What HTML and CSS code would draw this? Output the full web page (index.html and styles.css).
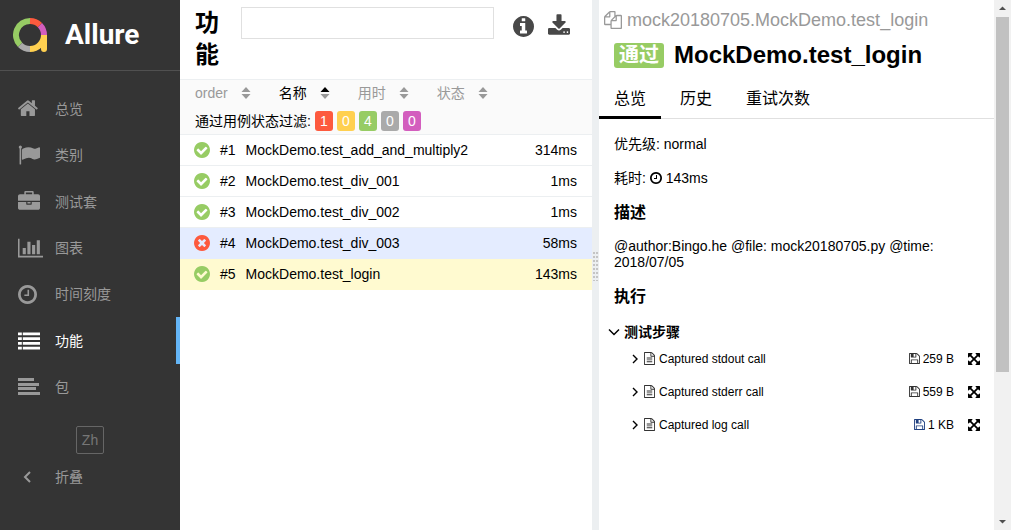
FILE: index.html
```html
<!DOCTYPE html>
<html lang="zh-CN">
<head>
<meta charset="utf-8">
<title>Allure</title>
<link rel="stylesheet" href="styles.css">
</head>
<body>
<svg class="sprite" aria-hidden="true">
  <symbol id="home" viewBox="90 64 1792 1792"><path d="M1472 992v480q0 26-19 45t-45 19h-384v-384h-256v384h-384q-26 0-45-19t-19-45v-480q0-1 .5-3t.5-3l575-474 575 474q1 2 1 6zm223-69l-62 74q-8 9-21 11h-3q-13 0-21-7l-692-577-692 577q-12 8-24 7-13-2-21-11l-62-74q-8-10-7-23.5t11-21.5l719-599q32-26 76-26t76 26l244 204v-195q0-14 9-23t23-9h192q14 0 23 9t9 23v408l219 182q10 8 11 21.5t-7 23.5z"/></symbol>
  <symbol id="flag" viewBox="0 0 1792 1792"><path d="M320 256q0 72-64 110v1266q0 13-9.5 22.5t-22.5 9.5h-64q-13 0-22.5-9.5t-9.5-22.5v-1266q-64-38-64-110 0-53 37.500-90.500t90.500-37.500 90.500 37.500 37.500 90.500zm1472 64v763q0 25-12.500 38.500t-39.500 27.500q-215 116-369 116-61 0-123.500-22t-108.500-48-115.500-48-142.500-22q-192 0-464 146-17 9-33 9-26 0-45-19t-19-45v-742q0-32 31-55 21-14 79-43 236-120 421-120 107 0 200 29t219 88q38 19 88 19 54 0 117.500-21t110-47 88-47 54.500-21q26 0 45 19t19 45z"/></symbol>
  <symbol id="briefcase" viewBox="0 0 1792 1792"><path d="M640 256h512v-128h-512v128zm1152 640v480q0 66-47 113t-113 47h-1472q-66 0-113-47t-47-113v-480h672v160q0 26 19 45t45 19h320q26 0 45-19t19-45v-160h672zm-768 0v128h-256v-128h256zm768-480v384h-1792v-384q0-66 47-113t113-47h352v-160q0-40 28-68t68-28h576q40 0 68 28t28 68v160h352q66 0 113 47t47 113z"/></symbol>
  <symbol id="chart" viewBox="0 0 2048 1792"><path d="M640 896v512h-256v-512h256zm384-512v1024h-256v-1024h256zm1024 1152v128h-2048v-1536h128v1408h1920zm-640-896v768h-256v-768h256zm384-384v1152h-256v-1152h256z"/></symbol>
  <symbol id="clock" viewBox="128 128 1536 1536"><path d="M1024 544v448q0 14-9 23t-23 9h-320q-14 0-23-9t-9-23v-64q0-14 9-23t23-9h224v-352q0-14 9-23t23-9h64q14 0 23 9t9 23zm416 352q0-148-73-273t-198-198-273-73-273 73-198 198-73 273 73 273 198 198 273 73 273-73 198-198 73-273zm224 0q0 209-103 385.500t-279.500 279.500-385.500 103-385.500-103-279.500-279.500-103-385.500 103-385.500 279.500-279.500 385.500-103 385.500 103 279.500 279.500 103 385.500z"/></symbol>
  <symbol id="list" viewBox="0 0 23 22"><path d="M0 2h4v3H0zM5 2h18v3H5zM0 7h4v3H0zM5 7h18v3H5zM0 12h4v3H0zM5 12h18v3H5zM0 17h4v3H0zM5 17h18v3H5z"/></symbol>
  <symbol id="package" viewBox="0 0 22 22"><path d="M0 2h16v3H0zM0 7h21v3H0zM0 11h18v3H0zM0 16h22v3H0z"/></symbol>
  <symbol id="check" viewBox="128 128 1536 1536"><path d="M1412 734q0-28-18-46l-91-90q-19-19-45-19t-45 19l-408 407-226-226q-19-19-45-19t-45 19l-91 90q-18 18-18 46 0 27 18 45l362 362q19 19 45 19 27 0 46-19l543-543q18-18 18-45zm252 162q0 209-103 385.500t-279.500 279.500-385.500 103-385.500-103-279.500-279.500-103-385.500 103-385.500 279.500-279.500 385.500-103 385.500 103 279.500 279.500 103 385.500z"/></symbol>
  <symbol id="times" viewBox="128 128 1536 1536"><path d="M1277 1122q0-26-19-45l-181-181 181-181q19-19 19-45 0-27-19-46l-90-90q-19-19-46-19-26 0-45 19l-181 181-181-181q-19-19-45-19-27 0-46 19l-90 90q-19 19-19 46 0 26 19 45l181 181-181 181q-19 19-19 45 0 27 19 46l90 90q19 19 46 19 26 0 45-19l181-181 181 181q19 19 45 19 27 0 46-19l90-90q19-19 19-46zm387-226q0 209-103 385.500t-279.500 279.500-385.500 103-385.500-103-279.500-279.500-103-385.500 103-385.500 279.500-279.500 385.500-103 385.500 103 279.500 279.500 103 385.500z"/></symbol>
  <symbol id="info" viewBox="128 128 1536 1536"><path d="M1152 1376v-160q0-14-9-23t-23-9h-96v-512q0-14-9-23t-23-9h-320q-14 0-23 9t-9 23v160q0 14 9 23t23 9h96v320h-96q-14 0-23 9t-9 23v160q0 14 9 23t23 9h448q14 0 23-9t9-23zm-128-896v-160q0-14-9-23t-23-9h-192q-14 0-23 9t-9 23v160q0 14 9 23t23 9h192q14 0 23-9t9-23zm640 416q0 209-103 385.500t-279.500 279.500-385.500 103-385.500-103-279.500-279.500-103-385.500 103-385.500 279.500-279.500 385.500-103 385.500 103 279.500 279.500 103 385.500z"/></symbol>
  <symbol id="download" viewBox="64 0 1664 1536"><path d="M1344 1344q0-26-19-45t-45-19-45 19-19 45 19 45 45 19 45-19 19-45zm256 0q0-26-19-45t-45-19-45 19-19 45 19 45 45 19 45-19 19-45zm128-224v320q0 40-28 68t-68 28h-1472q-40 0-68-28t-28-68v-320q0-40 28-68t68-28h465l135 136q58 56 136 56t136-56l136-136h464q40 0 68 28t28 68zm-325-569q17 41-14 70l-448 448q-18 19-45 19t-45-19l-448-448q-31-29-14-70 17-39 59-39h256v-448q0-26 19-45t45-19h256q26 0 45 19t19 45v448h256q42 0 59 39z"/></symbol>
  <symbol id="files" viewBox="0 0 1792 1792"><path d="M1696 384q40 0 68 28t28 68v1216q0 40-28 68t-68 28h-960q-40 0-68-28t-28-68v-288h-544q-40 0-68-28t-28-68v-672q0-40 20-88t48-76l408-408q28-28 76-48t88-20h416q40 0 68 28t28 68v328q68-40 128-40h416zm-544 213l-299 299h299v-299zm-640-384l-299 299h299v-299zm196 647l316-316v-416h-384v416q0 40-28 68t-68 28h-416v640h512v-256q0-40 20-88t48-76zm956 804v-1152h-384v416q0 40-28 68t-68 28h-416v640h896z"/></symbol>
  <symbol id="file" viewBox="128 0 1536 1792"><path d="M1596 380q28 28 48 76t20 88v1152q0 40-28 68t-68 28h-1344q-40 0-68-28t-28-68v-1600q0-40 28-68t68-28h896q40 0 88 20t76 48zm-444-244v376h376q-10-29-22-41l-313-313q-12-12-41-22zm384 1528v-1024h-416q-40 0-68-28t-28-68v-416h-768v1536h1280zM512 768h768v128h-768zM512 1024h768v128h-768zM512 1280h768v128h-768z"/></symbol>
  <symbol id="save" viewBox="128 128 1536 1536"><path d="M512 1536h768v-384h-768v384zm896 0h128v-896q0-14-10-38.500t-20-34.500l-281-281q-10-10-34-20t-39-10v416q0 40-28 68t-68 28h-576q-40 0-68-28t-28-68v-416h-128v1280h128v-416q0-40 28-68t68-28h832q40 0 68 28t28 68v416zm-384-928v-320q0-13-9.500-22.500t-22.500-9.500h-192q-13 0-22.500 9.500t-9.500 22.500v320q0 13 9.500 22.500t22.500 9.500h192q13 0 22.500-9.500t9.500-22.500zm640 32v928q0 40-28 68t-68 28h-1344q-40 0-68-28t-28-68v-1344q0-40 28-68t68-28h928q40 0 88 20t76 48l280 280q28 28 48 76t20 88z"/></symbol>
  <symbol id="expand" viewBox="128 128 1536 1536"><path d="M1411 541l-355 355 355 355 144-144q29-31 70-14 39 17 39 59v448q0 26-19 45t-45 19h-448q-42 0-59-40-17-39 14-69l144-144-355-355-355 355 144 144q31 30 14 69-17 40-59 40h-448q-26 0-45-19t-19-45v-448q0-42 40-59 39-17 69 14l144 144 355-355-355-355-144 144q-19 19-45 19-12 0-24-5-40-17-40-59v-448q0-26 19-45t45-19h448q42 0 59 40 17 39-14 69l-144 144 355 355 355-355-144-144q-31-30-14-69 17-40 59-40h448q26 0 45 19t19 45v448q0 42-39 59-13 5-25 5-26 0-45-19z"/></symbol>
  <symbol id="angle" viewBox="0 0 6 10"><path d="M1 1l4 4-4 4" fill="none" stroke="currentColor" stroke-width="1.400"/></symbol>
  <symbol id="angle-down" viewBox="0 0 12 8"><path d="M1 1.500l5 5 5-5" fill="none" stroke="currentColor" stroke-width="1.500"/></symbol>
  <symbol id="sort-up" viewBox="0 0 10 5"><path d="M5 0l4.500 5H.5z"/></symbol>
  <symbol id="sort-down" viewBox="0 0 10 5"><path d="M5 5l4.500-5H.5z"/></symbol>
</svg>
<div class="app">
  <aside class="side">
    <a class="brand" href="#">
      <svg class="logo" viewBox="0 0 34 34" stroke-width="6">
        <path stroke="#97cc64" d="M17 3A14 14 0 0 0 7.100 26.900"/>
        <path stroke="#aaa" d="M7.100 26.900A14 14 0 0 0 17 31"/>
        <path stroke="#fd5a3e" d="M17 3A14 14 0 0 1 26.900 7.100"/>
        <path stroke="#d35ebe" d="M26.900 7.100A14 14 0 0 1 31 17"/>
        <path stroke="#ffd050" d="M17 31A14 14 0 0 0 31 17"/>
        <path fill="#ffd050" d="M28 17h6v14a3 3 0 0 1-6 0z"/>
      </svg>
      <span>Allure</span>
    </a>
    <nav class="menu">
      <a href="#"><svg class="glyph"><use href="#home"/></svg>总览</a>
      <a href="#"><svg class="glyph"><use href="#flag"/></svg>类别</a>
      <a href="#"><svg class="glyph"><use href="#briefcase"/></svg>测试套</a>
      <a href="#"><svg class="glyph wide"><use href="#chart"/></svg>图表</a>
      <a href="#"><svg class="glyph small"><use href="#clock"/></svg>时间刻度</a>
      <a href="#" class="active" aria-current="page"><svg class="glyph"><use href="#list"/></svg>功能</a>
      <a href="#"><svg class="glyph"><use href="#package"/></svg>包</a>
    </nav>
    <button class="lang" type="button">Zh</button>
    <button class="collapse" type="button"><svg viewBox="0 0 8 12"><path d="M7 1L2 6l5 5" fill="none" stroke="currentColor" stroke-width="2"/></svg>折叠</button>
  </aside>

  <main class="list">
    <header class="list-head">
      <h1>功能</h1>
      <input class="search" type="text" aria-label="搜索">
      <button class="tool" type="button" aria-label="信息"><svg class="info"><use href="#info"/></svg></button>
      <button class="tool" type="button" aria-label="下载"><svg class="download"><use href="#download"/></svg></button>
    </header>
    <div class="controls">
      <div class="sorts">
        <button type="button">order<span class="carets"><svg><use href="#sort-up"/></svg><svg><use href="#sort-down"/></svg></span></button>
        <button type="button" class="current">名称<span class="carets"><svg class="asc"><use href="#sort-up"/></svg><svg><use href="#sort-down"/></svg></span></button>
        <button type="button">用时<span class="carets"><svg><use href="#sort-up"/></svg><svg><use href="#sort-down"/></svg></span></button>
        <button type="button">状态<span class="carets"><svg><use href="#sort-up"/></svg><svg><use href="#sort-down"/></svg></span></button>
      </div>
      <div class="filters">
        <span>通过用例状态过滤:</span>
        <button type="button" class="failed">1</button>
        <button type="button" class="broken">0</button>
        <button type="button" class="passed">4</button>
        <button type="button" class="skipped">0</button>
        <button type="button" class="unknown">0</button>
      </div>
    </div>
    <div class="rows">
      <a href="#"><svg><use href="#check"/></svg><span class="num">#1</span><span class="name">MockDemo.test_add_and_multiply2</span><span>314ms</span></a>
      <a href="#"><svg><use href="#check"/></svg><span class="num">#2</span><span class="name">MockDemo.test_div_001</span><span>1ms</span></a>
      <a href="#"><svg><use href="#check"/></svg><span class="num">#3</span><span class="name">MockDemo.test_div_002</span><span>1ms</span></a>
      <a href="#" class="hover"><svg class="fail"><use href="#times"/></svg><span class="num">#4</span><span class="name">MockDemo.test_div_003</span><span>58ms</span></a>
      <a href="#" class="selected"><svg><use href="#check"/></svg><span class="num">#5</span><span class="name">MockDemo.test_login</span><span>143ms</span></a>
    </div>
  </main>

  <div class="gutter"><i></i></div>

  <div class="pane">
    <section class="detail">
      <div class="crumb"><svg><use href="#files"/></svg>mock20180705.MockDemo.test_login</div>
      <h2><span class="badge">通过</span>MockDemo.test_login</h2>
      <nav class="tabs"><a href="#" class="on">总览</a><a href="#">历史</a><a href="#">重试次数</a></nav>
      <div class="body">
        <p>优先级: normal</p>
        <p>耗时: <svg class="time"><use href="#clock"/></svg> 143ms</p>
        <h3>描述</h3>
        <p>@author:Bingo.he @file: mock20180705.py @time: 2018/07/05</p>
        <h3>执行</h3>
        <button class="steps" type="button"><svg><use href="#angle-down"/></svg>测试步骤</button>
        <ul class="files">
          <li><svg class="arrow"><use href="#angle"/></svg><svg class="doc"><use href="#file"/></svg><span class="name">Captured stdout call</span><a href="#"><svg><use href="#save"/></svg>259 B</a><button type="button" aria-label="全屏"><svg><use href="#expand"/></svg></button></li>
          <li><svg class="arrow"><use href="#angle"/></svg><svg class="doc"><use href="#file"/></svg><span class="name">Captured stderr call</span><a href="#"><svg><use href="#save"/></svg>559 B</a><button type="button" aria-label="全屏"><svg><use href="#expand"/></svg></button></li>
          <li><svg class="arrow"><use href="#angle"/></svg><svg class="doc"><use href="#file"/></svg><span class="name">Captured log call</span><a href="#"><svg class="blue"><use href="#save"/></svg>1 KB</a><button type="button" aria-label="全屏"><svg><use href="#expand"/></svg></button></li>
        </ul>
      </div>
    </section>
    <div class="scroll" aria-hidden="true">
      <svg viewBox="0 0 17 17"><path d="M5 10h7L8.500 6.500z"/></svg>
      <i></i>
      <svg class="end" viewBox="0 0 17 17"><path d="M5 7h7l-3.500 3.500z"/></svg>
    </div>
  </div>
</div>
</body>
</html>
```
FILE: styles.css
```css
* { box-sizing: border-box; }
body {
  margin: 0;
  background: #fff;
  color: #000;
  font: 14px/16px "Liberation Sans", "Noto Sans CJK SC", sans-serif;
}
a { color: inherit; text-decoration: none; }
button { padding: 0; border: 0; background: none; color: inherit; font: inherit; cursor: pointer; }
svg { fill: currentColor; flex: none; }
.sprite { display: none; }
.app { display: flex; min-height: 100vh; }

.side {
  flex: 0 0 180px;
  display: flex;
  flex-direction: column;
  background: #343434;
  color: #999;
}
.brand {
  display: flex;
  align-items: center;
  gap: 18px;
  height: 71px;
  padding-left: 13px;
  border-bottom: 1px solid #505050;
  color: #fff;
  font: bold 28px/32px Roboto, sans-serif;
}
.logo { width: 34px; height: 34px; fill: none; }
.menu {
  display: grid;
  grid-auto-rows: 1fr;
  min-height: 324px;
  margin-top: 15px;
}
.menu a {
  display: grid;
  grid-template-columns: 37px 1fr;
  align-items: center;
  padding-left: 18px;
  border-right: 4px solid transparent;
}
.menu .active { color: #fff; border-color: #64b5f6; }
.glyph { width: 22px; height: 22px; }
.glyph.wide { width: 25px; }
.glyph.small { width: 19px; height: 19px; }
.lang {
  align-self: center;
  width: 28px;
  height: 28px;
  margin-top: 16px;
  border: 1px solid #666;
  border-radius: 2px;
  color: #777;
}
.collapse {
  display: flex;
  align-items: center;
  gap: 24px;
  height: 46px;
  padding-left: 23px;
}
.collapse svg { width: 8px; height: 12px; }

.list { flex: 1 1 0; min-width: 0; }
.list-head {
  display: flex;
  align-items: flex-start;
  padding: 7px 22px 8px 15px;
}
h1 { width: min-content; margin: 0 22px 0 0; font-size: 24px; line-height: 32px; }
.search { flex: 1; min-width: 0; height: 32px; margin-right: 19px; border: 1px solid #e0e0e0; }
.tool { height: 38px; margin-left: 14px; color: #484848; }
.tool:first-of-type { margin-left: 0; }
.tool svg { display: block; }
.info { width: 21px; height: 21px; }
.download { width: 22px; height: 21px; margin-bottom: 4px; }
.controls {
  padding: 3px 15px;
  border: solid #eceff1;
  border-width: 1px 0;
  background: #fafafa;
}
.sorts { display: flex; gap: 28px; color: #999; }
.sorts button { display: flex; align-items: center; gap: 13px; height: 20px; }
.sorts .current { color: #000; }
.carets { display: grid; gap: 2px; color: #999; }
.carets svg { display: block; width: 10px; height: 5px; }
.carets .asc { color: #000; }
.filters { display: flex; align-items: center; gap: 4px; height: 20px; margin-top: 8px; }
.filters button { width: 18px; height: 20px; border-radius: 3px; color: #fff; }
.failed { background: #fd5a3e; }
.broken { background: #ffd050; }
.passed, .badge { background: #97cc64; }
.skipped { background: #aaa; }
.unknown { background: #d35ebe; }
.rows a {
  display: flex;
  align-items: center;
  height: 31px;
  padding: 0 15px 0 14px;
  border-bottom: 1px solid #eceff1;
}
.rows svg { width: 16px; height: 16px; color: #97cc64; }
.rows .fail { color: #fd5a3e; }
.num { margin: 0 10px; }
.name { flex: 1; }
.rows .hover { background: #e4ecff; border-color: #e4ecff; }
.rows .selected { background: #fffad0; border-color: #fffad0; }

.gutter { flex: 0 0 7px; display: grid; place-items: center; background: #eceff1; }
.gutter i {
  width: 5px;
  height: 31px;
  background: repeating-linear-gradient(#eceff1 0 2px, transparent 2px 4px),
    linear-gradient(90deg, #c4c4c4 2px, transparent 2px 3px, #c4c4c4 3px);
}

.pane { flex: 1 1 0; min-width: 0; display: flex; }
.detail { flex: 1; min-width: 0; }
.crumb { display: flex; align-items: center; gap: 5px; padding: 10px 5px 0; color: #999; font-size: 18px; line-height: 20px; }
.crumb svg { width: 18px; height: 18px; }
h2 { display: flex; align-items: center; gap: 10px; margin: 9px 15px 0; font-size: 24px; line-height: 32px; }
.badge { padding: 0 5px; border-radius: 3px; color: #fff; font-size: 20px; line-height: 25px; }
.tabs { display: flex; gap: 4px; margin-top: 11px; border-bottom: 1px solid #e0e0e0; font-size: 16px; line-height: 24px; }
.tabs a { padding: 5px 15px; margin-bottom: -1px; border-bottom: 3px solid transparent; }
.tabs .on { border-color: #000; }
.body { padding: 17px 14px 0 15px; }
p { margin: 0 0 18px; }
.time { width: 12px; height: 12px; vertical-align: -1px; }
h3 { margin: 19px 0 17px; font-size: 16px; line-height: 16px; }
.steps { display: flex; align-items: center; gap: 4px; height: 20px; margin-left: -6px; font-weight: bold; }
.steps svg { width: 12px; height: 8px; }
.files { margin: 0; padding: 0 0 0 18px; list-style: none; font-size: 12px; }
.files li { display: flex; align-items: center; height: 33px; }
.arrow { width: 6px; height: 10px; margin-right: 6px; }
.doc { width: 11px; height: 13px; margin-right: 4px; color: #333; }
.files a { display: flex; align-items: center; gap: 3px; margin-right: 14px; }
.files a svg { width: 11px; height: 11px; color: #333; }
.files a .blue { color: #204080; }
.files button svg { display: block; width: 12px; height: 12px; }

.scroll { flex: 0 0 17px; display: flex; flex-direction: column; background: #f1f1f1; color: #505050; }
.scroll svg { width: 17px; height: 17px; }
.scroll i { flex: 0 0 67%; width: 13px; margin: 0 auto; background: #c1c1c1; }
.scroll .end { margin-top: auto; }
```
